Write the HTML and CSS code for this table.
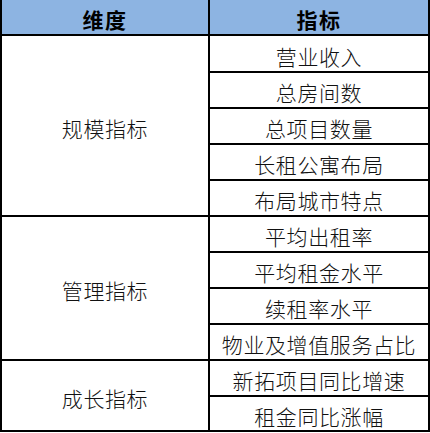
FILE: index.html
```html
<!DOCTYPE html>
<html lang="zh-CN">
<head>
<meta charset="utf-8">
<title>指标表</title>
<link rel="stylesheet" href="styles.css">
</head>
<body>
<div class="sheet">
  <div class="cell head">维度</div>
  <div class="cell head">指标</div>

  <div class="cell dim span5">规模指标</div>
  <div class="cell item first">营业收入</div>
  <div class="cell item">总房间数</div>
  <div class="cell item">总项目数量</div>
  <div class="cell item">长租公寓布局</div>
  <div class="cell item">布局城市特点</div>

  <div class="cell dim span4">管理指标</div>
  <div class="cell item">平均出租率</div>
  <div class="cell item">平均租金水平</div>
  <div class="cell item">续租率水平</div>
  <div class="cell item">物业及增值服务占比</div>

  <div class="cell dim span2">成长指标</div>
  <div class="cell item">新拓项目同比增速</div>
  <div class="cell item">租金同比涨幅</div>
</div>
</body>
</html>
```

FILE: styles.css
```css
html, body {
  margin: 0;
  padding: 0;
  background: #ffffff;
}

.sheet {
  display: grid;
  grid-template-columns: 206px 218px;
  grid-template-rows: 34px 35px repeat(9, 34px) 33px;
  gap: 2px;
  padding: 0 2px 2px 2px;
  width: 430px;
  box-sizing: border-box;
  background: #000000;
  font-family: "Noto Sans CJK SC", "Noto Sans", sans-serif;
}

.cell {
  display: flex;
  align-items: center;
  justify-content: center;
  background: #ffffff;
  color: #111111;
  font-size: 21px;
  font-weight: 300;
  letter-spacing: 0.6px;
  line-height: 1;
  padding-top: 5px;
  box-sizing: border-box;
  white-space: nowrap;
}

.head {
  background: #8db4e2;
  font-weight: 700;
  color: #000000;
  letter-spacing: 1.5px;
}

.span5 { grid-row: span 5; }
.span4 { grid-row: span 4; }
.span2 { grid-row: span 2; }
```
